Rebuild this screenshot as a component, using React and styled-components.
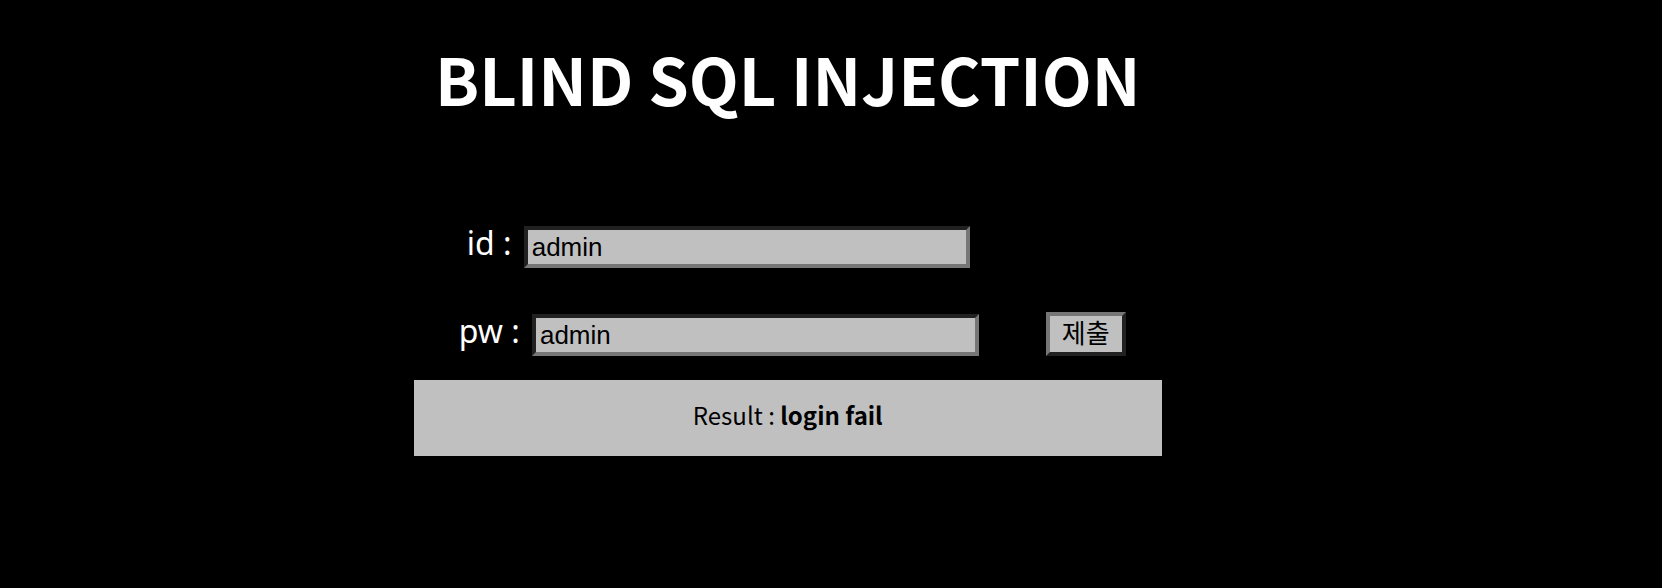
import React from "react";
import styled, { createGlobalStyle } from "styled-components";

const GlobalStyle = createGlobalStyle`
  * { box-sizing: border-box; }
  body { margin: 0; background: #000; color: #fff; font-family: "Noto Sans CJK KR", "Noto Sans", sans-serif; }
`;
const Main = styled.main`
  width: 45%;
  margin-left: 24.9%;
  padding-top: 28px;
`;
const Title = styled.h1`
  margin: 0 0 96px;
  font-size: 65px;
  line-height: 100px;
  font-weight: 700;
  text-align: center;
  white-space: nowrap;
`;
const Form = styled.form`
  display: flex;
  flex-direction: column;
  gap: 44px;
  padding: 0 36px 0 45px;
`;
const Row = styled.div`
  display: flex;
  align-items: flex-end;
`;
const Label = styled.label`
  margin-right: 12px;
  padding-left: ${(p) => p.$indent}px;
  font-family: "Noto Sans", sans-serif;
  font-size: 32px;
  line-height: 38px;
  height: 44px;
  white-space: pre;
`;
const Field = styled.input`
  width: 67%;
  flex-shrink: 0;
  height: 42px;
  padding: 2px 4px;
  border: 4px inset #767676;
  border-radius: 0;
  background: #c0c0c0;
  color: #000;
  font: 26px "Liberation Sans", Arial, sans-serif;
`;
const Submit = styled.button`
  width: 80px;
  height: 44px;
  margin-left: auto;
  padding: 0;
  border: 4px outset #767676;
  background: #c0c0c0;
  color: #000;
  font: 26px/32px "Liberation Sans", "Noto Sans CJK KR", sans-serif;
`;
const Result = styled.p`
  margin: 24px 0 0;
  padding: 17px 0 23px;
  background: #c0c0c0;
  color: #000;
  font-size: 24px;
  line-height: 36px;
  text-align: center;
`;

export default function App() {
  return (
    <>
      <GlobalStyle />
      <Main>
        <Title>BLIND SQL INJECTION</Title>
        <Form onSubmit={(e) => e.preventDefault()}>
          <Row>
            <Label htmlFor="id" $indent={8}>id :</Label>
            <Field id="id" defaultValue="admin" />
          </Row>
          <Row>
            <Label htmlFor="pw" $indent={0}>pw :</Label>
            <Field id="pw" defaultValue="admin" />
            <Submit type="submit">제출</Submit>
          </Row>
        </Form>
        <Result>Result : <b>login fail</b></Result>
      </Main>
    </>
  );
}
